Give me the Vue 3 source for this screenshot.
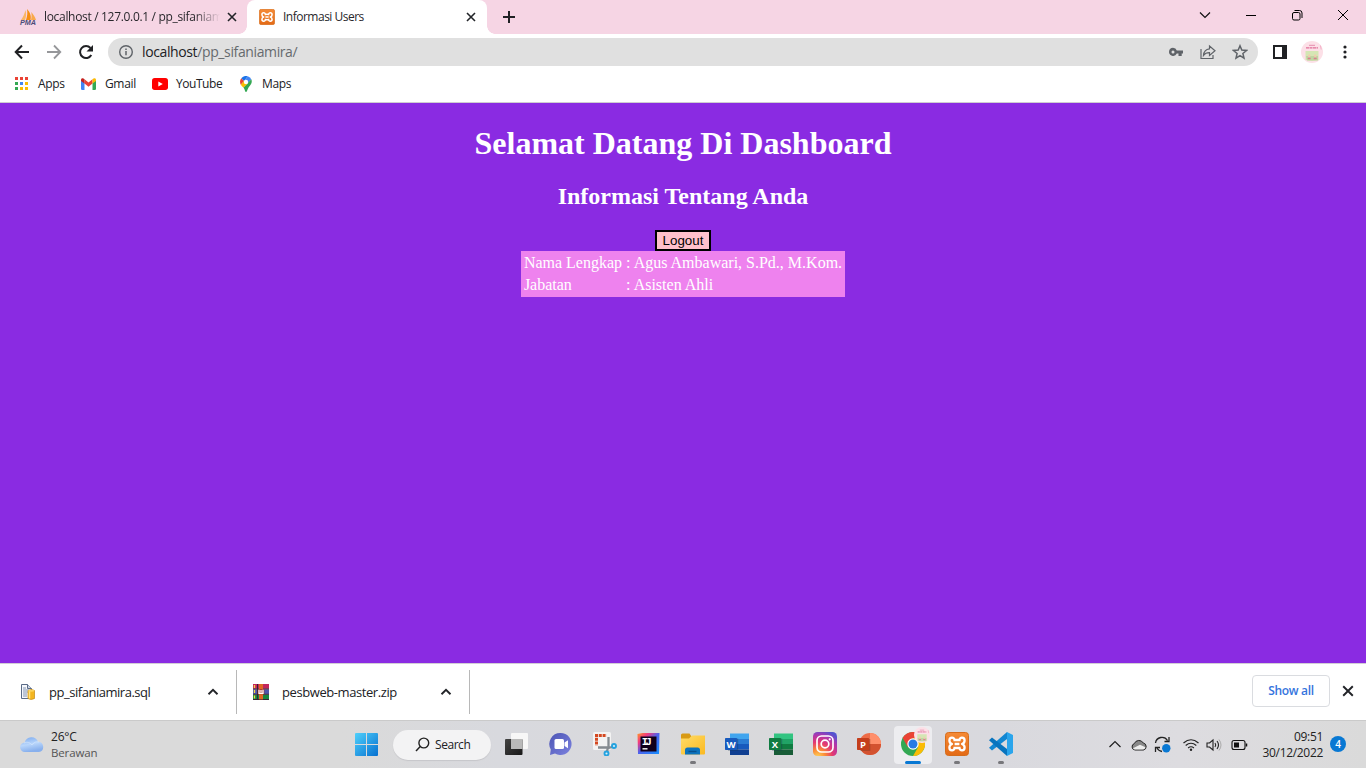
<script setup>
const apps = ['#ea4335', '#ea4335', '#ea4335', '#34a853', '#4285f4', '#fbbc04', '#34a853', '#fbbc04', '#fbbc04']
const office = [
  { letter: 'W', name: 'word', colors: ['#41a5ee', '#2b7cd3', '#185abd', '#103f91'], tile: '#185abd' },
  { letter: 'X', name: 'excel', colors: ['#33c481', '#21a366', '#107c41', '#185c37'], tile: '#107c41' },
]
const person = [
  ['Nama Lengkap', ': Agus Ambawari, S.Pd., M.Kom.'],
  ['Jabatan', ': Asisten Ahli'],
]
</script>

<template>
  <div class="screen">
    <svg class="defs" width="0" height="0" aria-hidden="true">
      <defs>
        <linearGradient id="orange" x1="0" y1="0" x2="0" y2="1"><stop offset="0" stop-color="#f58a35" /><stop offset="1" stop-color="#e36a16" /></linearGradient>
        <linearGradient id="win" x1="0" y1="0" x2="1" y2="1"><stop offset="0" stop-color="#4fd0fb" /><stop offset="1" stop-color="#0670d0" /></linearGradient>
        <linearGradient id="cloud" x1="0" y1="0" x2="0.3" y2="1"><stop offset="0" stop-color="#78a8ee" /><stop offset="0.55" stop-color="#b9d6fb" /><stop offset="1" stop-color="#88b0ed" /></linearGradient>
        <linearGradient id="chat" x1="0" y1="0" x2="1" y2="1"><stop offset="0" stop-color="#4c55b4" /><stop offset="1" stop-color="#7c82df" /></linearGradient>
        <linearGradient id="fold" x1="0" y1="0" x2="1" y2="1"><stop offset="0" stop-color="#ffdc68" /><stop offset="1" stop-color="#fbb920" /></linearGradient>
        <linearGradient id="ij" x1="0" y1="0" x2="1" y2="1"><stop offset="0" stop-color="#ff9a2a" /><stop offset="0.25" stop-color="#f4397d" /><stop offset="0.5" stop-color="#4b62ee" /><stop offset="1" stop-color="#1590ff" /></linearGradient>
        <radialGradient id="insta" cx="0.2" cy="1.05" r="1.15"><stop offset="0" stop-color="#fed559" /><stop offset="0.28" stop-color="#fb8b37" /><stop offset="0.55" stop-color="#e33872" /><stop offset="0.8" stop-color="#ae37ae" /><stop offset="1" stop-color="#5453d0" /></radialGradient>
        <linearGradient id="dark" x1="0" y1="0" x2="1" y2="1"><stop offset="0" stop-color="#444" /><stop offset="1" stop-color="#181818" /></linearGradient>
        <symbol id="xampp" viewBox="0 0 24 24">
          <rect x="0.5" y="0.5" width="23" height="23" rx="3" fill="url(#orange)" stroke="#d66c1b" />
          <path d="M9.600 9.300V8.400C9.600 4.700 4.400 4.800 4.400 8.500c0 1.800.8 2.900 2.600 3.500-1.800.6-2.600 1.700-2.600 3.500 0 3.700 5.200 3.800 5.200.1v-.9M14.400 9.300V8.400c0-3.700 5.200-3.600 5.200.1 0 1.800-.8 2.900-2.600 3.500 1.800.6 2.600 1.700 2.600 3.500 0 3.700-5.200 3.800-5.200.1v-.9M9.600 12h4.800M10 8h4M10 16h4" fill="none" stroke="#fff" stroke-width="2.300" stroke-linejoin="round" />
        </symbol>
        <symbol id="cross" viewBox="0 0 10 10"><path d="M1 1l8 8M9 1l-8 8" stroke="#222428" stroke-width="1.600" /></symbol>
        <symbol id="caret" viewBox="0 0 12 8"><path d="M1.500 6.200L6 1.900l4.500 4.300" fill="none" stroke="#222428" stroke-width="1.900" /></symbol>
        <symbol id="avatar" viewBox="0 0 22 22">
          <circle cx="11" cy="11" r="11" fill="#fce0e7" />
          <path d="M8 4.300h6" stroke="#e58cae" /><path d="M5 6.800h12" stroke="#df6e99" stroke-width="1.300" stroke-dasharray="3 .5" />
          <path d="M4.500 10h13v9l-6.500 1-6.500-1z" fill="#d5e6b4" /><path d="M5 15h12v4.500H6z" fill="#c0d5a2" />
          <circle cx="8.200" cy="14.800" r="1.300" fill="#f3cbb0" /><circle cx="14.200" cy="14.800" r="1.300" fill="#f3cbb0" />
          <path d="M6.700 17.500h3M12.700 17.500h3" stroke="#dc8090" stroke-width="1.700" /><path d="M19.500 4.500l.7 4" stroke="#f3abc4" />
        </symbol>
      </defs>
    </svg>

    <header class="tabs">
      <div class="tab idle">
        <svg class="pma" width="18" height="18" viewBox="0 0 18 18">
          <path d="M2 12C4 9 5.500 6 6.500 2c1 4 .7 7-.5 10z" fill="#f9b666" /><path d="M7 12c1.500-4 1.600-8 1-11 3 3 4.500 7 3.500 11z" fill="#f68e12" /><path d="M12 12c.8-3 .7-6 .2-8 2 2 4 5 4.800 8z" fill="#f9a94b" />
          <text x="1" y="16.700" textLength="16" lengthAdjust="spacingAndGlyphs" font-family="Liberation Sans" font-size="7" font-weight="700" font-style="italic" fill="#4b4b78">PMA</text>
        </svg>
        <span class="title faded">localhost / 127.0.0.1 / pp_sifaniamira</span>
        <svg class="close" width="10" height="10"><use href="#cross" /></svg>
      </div>
      <div class="tab active">
        <svg width="16" height="16"><use href="#xampp" /></svg>
        <span class="title users">Informasi Users</span>
        <svg class="close" width="10" height="10"><use href="#cross" /></svg>
      </div>
      <svg class="plus" width="12" height="12" viewBox="0 0 12 12"><path d="M6 0v12M0 6h12" stroke="#202124" stroke-width="2" /></svg>
      <div class="window-buttons">
        <svg width="12" height="12" viewBox="0 0 12 12"><path d="M1 3.500l5 5 5-5" fill="none" stroke="#111" stroke-width="1.200" /></svg>
        <svg width="12" height="12" viewBox="0 0 12 12"><path d="M1 6.500h10" stroke="#000" /></svg>
        <svg width="12" height="12" viewBox="0 0 12 12"><rect x="1.500" y="3.500" width="7.500" height="7.500" rx="1.500" fill="none" stroke="#000" /><path d="M3.500 1.500h5a2.500 2.500 0 012.500 2.500v5" fill="none" stroke="#000" /></svg>
        <svg width="12" height="12" viewBox="0 0 12 12"><path d="M1 1l10 10M11 1L1 11" stroke="#000" /></svg>
      </div>
    </header>

    <nav class="toolbar">
      <svg width="16" height="16" viewBox="0 0 16 16"><path d="M15 8H2M8 1.500L1.700 8 8 14.500" fill="none" stroke="#202124" stroke-width="2" /></svg>
      <svg width="16" height="16" viewBox="0 0 16 16"><path d="M1 8h13M8 1.500L14.300 8 8 14.500" fill="none" stroke="#96979a" stroke-width="1.800" /></svg>
      <svg width="16" height="16" viewBox="0 0 16 16"><path d="M13.300 11A6 6 0 1 1 12.500 4" fill="none" stroke="#202124" stroke-width="2" /><path d="M15 1v6.500H8.500z" fill="#202124" /></svg>
      <div class="address">
        <svg class="info" width="16" height="16" viewBox="0 0 16 16"><circle cx="8" cy="8" r="6.300" fill="none" stroke="#5f6368" stroke-width="1.400" /><path d="M8 7v4.300M8 4.400v1.500" stroke="#5f6368" stroke-width="1.500" /></svg>
        <span class="url">localhost<span>/pp_sifaniamira/</span></span>
        <div class="actions">
          <svg width="16" height="16" viewBox="0 0 16 16"><path fill-rule="evenodd" d="M5 3.700a4 4 0 013.800 2.700H15v3.200h-1.300V12h-3.200V9.600H8.800A4.100 4.100 0 115 3.700zM5 6.400a1.500 1.500 0 100 3 1.500 1.500 0 000-3z" fill="#5f6368" /></svg>
          <svg width="16" height="16" viewBox="0 0 16 16"><path d="M1 5v9.500h12V11M9.500 2l5.500 4.800-5.500 4.700V8.700c-3 0-4.700.8-6 2.700.3-4 2.600-6.200 6-6.600z" fill="none" stroke="#5f6368" stroke-width="1.200" /></svg>
          <svg width="16" height="16" viewBox="0 0 16 16"><path d="M8 1.800l1.800 4.300 4.700.4-3.600 3 1.100 4.700L8 11.700l-4 2.500 1.100-4.700-3.600-3 4.700-.4z" fill="none" stroke="#5f6368" stroke-width="1.500" /></svg>
        </div>
      </div>
      <svg class="panel" width="14" height="14" viewBox="0 0 14 14"><path d="M1 1h12v12H1z" fill="none" stroke="#202124" stroke-width="2" /><path d="M9 0h5v14H9z" fill="#202124" /></svg>
      <svg class="face" width="22" height="22"><use href="#avatar" /></svg>
      <svg class="more" width="4" height="14" viewBox="0 0 4 14"><g fill="#202124"><circle cx="2" cy="2" r="1.600" /><circle cx="2" cy="7" r="1.600" /><circle cx="2" cy="12" r="1.600" /></g></svg>
    </nav>

    <nav class="bookmarks">
      <span class="mark m-apps"><span class="grid"><i v-for="(c, i) in apps" :key="i" :style="{ background: c }"></i></span><b>Apps</b></span>
      <span class="mark m-mail">
        <svg width="15" height="12" viewBox="0 0 15 12"><path d="M0 2l3.500 2.500V12H1.300A1.300 1.300 0 010 10.700z" fill="#4285f4" /><path d="M15 2l-3.500 2.500V12h2.200a1.300 1.300 0 001.300-1.300z" fill="#34a853" /><path d="M3.500 1.200l4 3.200 4-3.200v4.300l-4 3.200-4-3.200z" fill="#ea4335" /><path d="M0 2C0 .2 1.900-.4 3.500 1.200v4.300L0 3z" fill="#c5221f" /><path d="M15 2c0-1.800-1.900-2.400-3.500-.8v4.300L15 3z" fill="#fbbc04" /></svg><b>Gmail</b>
      </span>
      <span class="mark m-tube"><svg width="16" height="12" viewBox="0 0 16 12"><rect width="16" height="12" rx="2.700" fill="#f00" /><path d="M6.300 3.400v5.200L10.800 6z" fill="#fff" /></svg><b>YouTube</b></span>
      <span class="mark m-maps">
        <svg width="12" height="16" viewBox="0 0 12 16"><path d="M1.300 2.300L4.200 5 .8 8.700A6 6 0 011.300 2.300z" fill="#ea4335" /><path d="M1.300 2.300A6 6 0 017.800.3L4.200 5z" fill="#1a73e8" /><path d="M7.800.3a6 6 0 013.500 3L7.600 7.500 4.200 5z" fill="#4285f4" /><path d="M11.300 3.300c1.300 3-.4 5.200-2.200 7.400C7.500 12.700 7 16 6 16s-1-2.500-2.600-4.500z" fill="#34a853" /><path d="M.8 8.700l3.400-4 3.400 3-4.200 3.800A13 13 0 01.8 8.700z" fill="#fbbc04" /><circle cx="6" cy="6" r="2.200" fill="#fff" /></svg><b>Maps</b>
      </span>
    </nav>

    <main class="page">
      <h1>Selamat Datang Di Dashboard</h1>
      <h2>Informasi Tentang Anda</h2>
      <button>Logout</button>
      <table><tbody><tr v-for="row in person" :key="row[0]"><td>{{ row[0] }}</td><td>{{ row[1] }}</td></tr></tbody></table>
    </main>

    <section class="downloads">
      <div class="file first">
        <svg width="16" height="16" viewBox="0 0 16 16"><path d="M1.500.5h6l4 4v10h-10z" fill="#f5f7fb" stroke="#5a6b87" /><path d="M7.500.5v4h4" fill="#d0d8e4" stroke="#5a6b87" /><path d="M3 4h3M3 6h6M3 8h5M3 10h4M3 12h4" stroke="#7688a8" stroke-width=".9" /><path d="M8 6.500q3.500-2 6.500 0v8q-3.500 2-6.500 0z" fill="#f3b51f" stroke="#c48a12" stroke-width=".7" /><path d="M9.500 7v7.500" stroke="#ffe380" stroke-width="1.500" /><ellipse cx="11.200" cy="6.700" rx="3.200" ry="1" fill="#fbd45e" /></svg>
        <span class="sql">pp_sifaniamira.sql</span><svg class="up" width="12" height="8"><use href="#caret" /></svg>
      </div>
      <div class="file second">
        <svg width="16" height="16" viewBox="0 0 16 16"><path d="M0 0h16v4.800H0z" fill="#c3265b" /><path d="M0 5.300h16v4.800H0z" fill="#4e55ae" /><path d="M0 10.600h16v4.800H0z" fill="#178640" /><path d="M0 5h16M0 10.300h16M4.500 0v15.400M0 15.500h16" stroke="#372334" /><path d="M6 0h4v15.400H6z" fill="#df6725" /><path d="M1.500 1v3M1.500 6v3M1.500 11.500v3" stroke="#f6d747" stroke-width="1.300" /><path d="M4.800 5.200h6.500v5H4.800z" fill="#a5322e" /><path d="M6 5.800v3.500h4V5.800M8 6v2.500" fill="none" stroke="#fff" stroke-width="1.300" /></svg>
        <span class="zip">pesbweb-master.zip</span><svg class="up" width="12" height="8"><use href="#caret" /></svg>
      </div>
      <div class="show"><span>Show all</span></div>
      <svg class="dismiss" width="12" height="12"><use href="#cross" /></svg>
    </section>

    <footer class="taskbar">
      <div class="weather">
        <svg width="24" height="16" viewBox="0 0 24 16"><path d="M5 16a4.800 4.800 0 01-.3-9.600A7 7 0 0118 5.700 5.200 5.200 0 0119 16z" fill="url(#cloud)" /><path d="M4 7c3-1.500 6-.5 8 2 2-3 4-3.500 7-3" fill="none" stroke="#e1eefe" stroke-width=".7" opacity=".7" /></svg>
        <div><p class="temp">26°C</p><p class="sky">Berawan</p></div>
      </div>
      <svg class="start" width="23" height="23" viewBox="0 0 23 23"><path d="M0 1q0-1 1-1h10v11H0zM12 0h10q1 0 1 1v10H12zM0 12h11v11H1q-1 0-1-1zM12 12h11v10q0 1-1 1H12z" fill="url(#win)" /></svg>
      <div class="search"><svg width="15" height="15" viewBox="0 0 15 15"><circle cx="8.800" cy="6" r="4.900" fill="none" stroke="#222" stroke-width="1.400" /><path d="M5.200 9.600L1 14" stroke="#222" stroke-width="1.500" /></svg><span>Search</span></div>
      <div class="dock">
        <span class="slot"><svg width="24" height="24" viewBox="0 0 24 24"><rect x="6" y="1" width="17" height="16" rx="1" fill="#f7f7f7" /><rect x="0" y="7" width="17.500" height="16" rx="1" fill="url(#dark)" /><path d="M6 7h11.500v10H6z" fill="#b9b9b9" /></svg></span>
        <span class="slot"><svg width="24" height="24" viewBox="0 0 24 24"><path d="M11.500 1a11 11 0 11-5.500 20.500L1 23l.8-5.500A11 11 0 0111.500 1z" fill="url(#chat)" /><rect x="5.500" y="7" width="9.500" height="10" rx="1.500" fill="#fff" /><path d="M15.500 10.500l3.500-2.300v8L15.500 14z" fill="#fff" /></svg></span>
        <span class="slot"><svg width="24" height="24" viewBox="0 0 24 24"><rect x="0" y="0" width="18" height="18" rx="1.500" fill="#f3f3f3" /><path d="M2 3.500h11.500M3.500 5.800v8" fill="none" stroke="#d44820" stroke-width="3" stroke-dasharray="3 .8" /><path d="M15.500 5v11L22 14M5 15.500h10l-1.500 6" fill="none" stroke="#858b90" stroke-width="2.300" /><g fill="#d8eef8" stroke="#24a2df" stroke-width="1.900"><circle cx="21" cy="14" r="2" /><circle cx="13.500" cy="21.500" r="2" /></g></svg></span>
        <span class="slot"><svg width="24" height="24" viewBox="0 0 24 24"><path d="M.5 2l5-1h17l-.5 21H1z" fill="url(#ij)" /><path d="M3.500 4.500h16v15h-16z" fill="#10001a" /><text x="4.800" y="13" font-family="Liberation Mono" font-weight="700" font-size="10.500" textLength="10" fill="#fff">IJ</text><path d="M5.500 16.800h5" stroke="#eee" stroke-width="1.500" /></svg></span>
        <span class="slot"><svg width="24" height="24" viewBox="0 0 24 24"><path d="M0 3q0-1.500 1.500-1.500h7l2 3v7H0z" fill="#d89a15" /><path d="M0 6.500h8l3-3h13v18q0 1-1 1H1q-1 0-1-1z" fill="url(#fold)" /><path d="M4 22.500V18q0-2.500 2.500-2.500h10Q19 15.500 19 18v4.500z" fill="#0d73bd" /><path d="M7.500 19.500h8" stroke="#07508d" stroke-width="1.400" /></svg><i class="run"></i></span>
        <span v-for="app in office" :key="app.name" class="slot"><svg width="24" height="24" viewBox="1 0 24 24"><path d="M6 1.500h19V7H6z" :fill="app.colors[0]" /><path d="M6 7h19v5H6z" :fill="app.colors[1]" /><path d="M6 12h19v5.500H6z" :fill="app.colors[2]" /><path d="M6 17.500h19V23H6z" :fill="app.colors[3]" /><path d="M12 6.500h2.200v12.200H4V18" fill="#173653" opacity=".35" /><rect x="1" y="6" width="12" height="12" rx=".7" :fill="app.tile" /><text x="7" y="15.500" text-anchor="middle" font-family="Open Sans" font-size="9.500" font-weight="700" fill="#fff">{{ app.letter }}</text></svg></span>
        <span class="slot"><svg width="24" height="24" viewBox="0 0 24 24"><rect width="24" height="24" rx="4.500" fill="url(#insta)" /><rect x="4" y="4" width="16" height="16" rx="4.500" fill="none" stroke="#fff" stroke-width="1.700" /><circle cx="12" cy="12" r="3.800" fill="none" stroke="#fff" stroke-width="1.700" /><circle cx="16.700" cy="7.300" r="1.100" fill="#fff" /></svg></span>
        <span class="slot"><svg width="24" height="24" viewBox="1 0 24 24"><circle cx="14" cy="12" r="11" fill="#ed6c47" /><path d="M14 1a11 11 0 0111 11H14z" fill="#ff8f6b" /><path d="M3 12h22a11 11 0 01-22 0z" fill="#d35230" /><path d="M12 7h2.300v12H4" fill="#76311f" opacity=".4" /><rect x="1" y="6" width="12" height="12" rx=".7" fill="#c43e1c" /><text x="7" y="15.500" text-anchor="middle" font-family="Open Sans" font-size="9.500" font-weight="700" fill="#fff">P</text></svg></span>
        <span class="slot current">
          <svg width="24" height="24" viewBox="0 0 24 24"><circle cx="12" cy="12" r="12" fill="#34a853" /><path d="M1.600 6A12 12 0 0122.400 6H12L6.800 15z" fill="#ea4335" /><path d="M22.400 6A12 12 0 0112 24l5.200-9L12 6z" fill="#fbbc04" /><circle cx="12" cy="12" r="5.700" fill="#fff" /><circle cx="12" cy="12" r="4.500" fill="#287be3" /></svg>
          <svg class="profile" width="16" height="16"><use href="#avatar" /></svg><i class="run"></i>
        </span>
        <span class="slot"><svg width="24" height="24"><use href="#xampp" /></svg><i class="run"></i></span>
        <span class="slot"><svg width="24" height="24" viewBox="0 0 24 24"><path d="M18 0l6 3v18l-6 3z" fill="#2aa5ec" /><path d="M18 0L0 15.800 3 18.500 18 7z" fill="#1287d2" /><path d="M0 8.200L3 5.500 18 17v7z" fill="#0874be" /></svg><i class="run"></i></span>
      </div>
      <div class="tray">
        <svg class="t-up" width="14" height="9" viewBox="0 0 14 9"><path d="M1.500 7L7 1.600 12.500 7" fill="none" stroke="#222" stroke-width="1.300" /></svg>
        <svg class="t-cloud" width="16" height="12" viewBox="0 0 16 12"><path d="M4 11A3.300 3.300 0 013.300 4.600 5 5 0 0112.300 4 3.600 3.600 0 0112.500 11z" fill="#898989" stroke="#222" stroke-width="1" /><path d="M2 9.200l7-3.400 5.500 2.500q-.5 2.200-3 2.200H4q-1.500 0-2-1.300z" fill="#ededed" /></svg>
        <svg class="t-sync" width="17" height="17" viewBox="0 0 17 17"><path d="M1.500 7A6.500 6.500 0 0113.500 4.500M15 1v4.500h-4.500M8 15.500q-3-.6-5-3.200M1.500 16v-4.500H6" fill="none" stroke="#222" stroke-width="1.300" /><circle cx="12.300" cy="12.300" r="4.200" fill="#0878d3" /></svg>
        <svg class="t-wifi" width="16" height="14" viewBox="0 0 16 14"><path d="M.5 5Q8-1.500 15.500 5M2.700 7.500q5.300-4.500 10.600 0M5.100 10q2.900-2.500 5.800 0" fill="none" stroke="#222" stroke-width="1.200" /><circle cx="8" cy="11.800" r="1.200" fill="#222" /></svg>
        <svg class="t-sound" width="16" height="14" viewBox="0 0 16 14"><path d="M1 5h2.500L7 2v10L3.500 9H1zM9 5q1.500 2 0 4M11 3q3 4 0 8" fill="none" stroke="#222" stroke-width="1.100" /><path d="M13 1.500q4 5.500 0 11" fill="none" stroke="#aaa" /></svg>
        <svg class="t-battery" width="17" height="12" viewBox="0 0 17 12"><rect x="1" y="1.500" width="13" height="9" rx="2" fill="none" stroke="#111" stroke-width="1.100" /><path d="M3 3.500h5v5H3z" fill="#111" /><path d="M15.500 4.500v3" stroke="#111" stroke-width="1.500" /></svg>
        <div class="clock"><p class="hour">09:51</p><p class="date">30/12/2022</p></div>
        <span class="badge">4</span>
      </div>
    </footer>
  </div>
</template>

<style>
html, body { margin: 0; overflow: hidden; }
</style>

<style scoped>
* { box-sizing: border-box; }
.screen { width: 1366px; height: 768px; display: flex; flex-direction: column; background: #fff; color: #202124; font: 12px/16px "Open Sans", "Noto Sans", sans-serif; overflow: hidden; }
.defs { position: absolute; }
svg { display: block; flex: none; }
p { margin: 0; }
span { white-space: nowrap; }
.tabs { height: 34px; flex: none; display: flex; align-items: center; background: #f6d5e4; }
.tab { height: 34px; display: flex; align-items: center; position: relative; }
.idle { width: 247px; padding-left: 19px; }
.active { width: 240px; padding-left: 12px; background: #fff; border-radius: 8px 8px 0 0; }
.active::before, .active::after { content: ""; position: absolute; bottom: 0; width: 8px; height: 8px; }
.active::before { left: -8px; background: radial-gradient(circle at 0 0, transparent 7.500px, #fff 8px); }
.active::after { right: -8px; background: radial-gradient(circle at 100% 0, transparent 7.500px, #fff 8px); }
.title { color: #28272b; letter-spacing: -.32px; }
.idle .title { margin-left: 7px; width: 176px; overflow: hidden; mask-image: linear-gradient(90deg, #000 150px, transparent 176px); }
.active .title { margin-left: 8px; letter-spacing: -.5px; }
.close { margin-left: auto; margin-right: 11px; }
.idle .close { margin-right: 10px; }
.plus { margin-left: 16px; }
.window-buttons { margin-left: auto; margin-right: 17px; margin-bottom: 5px; display: flex; gap: 34px; }
.toolbar { height: 36px; flex: none; padding-left: 14px; display: flex; align-items: center; gap: 16px; }
.address { width: 1150px; height: 28px; border-radius: 14px; background: #e0e0e0; display: flex; align-items: center; padding: 0 10px; margin-left: -2px; }
.url { margin-left: 8px; font-size: 14px; line-height: 20px; letter-spacing: -.38px; }
.url span { color: #666a6e; }
.actions { display: flex; gap: 16px; margin-left: auto; }
.panel { margin-left: -1px; }
.face { margin-left: -2px; }
.more { margin-left: 4px; }
.bookmarks { height: 33px; flex: none; display: flex; padding: 0 0 4px 15px; align-items: center; border-bottom: 1px solid #cfccd2; }
.mark { display: flex; align-items: center; }
.mark b { font-weight: 400; letter-spacing: -.35px; }
.m-apps { width: 66px; gap: 10px; }
.m-mail { width: 71px; gap: 9px; }
.m-tube { width: 88px; gap: 8px; }
.m-tube b { letter-spacing: -.45px; }
.m-maps { gap: 10px; }
.grid { width: 13px; height: 13px; display: grid; grid-template-columns: repeat(3, 3px); gap: 2px; margin-bottom: 1px; }
.grid i { height: 3px; }
.page { height: 560px; flex: none; display: flex; flex-direction: column; align-items: center; background: #8a2be2; color: #fff; font-family: "Liberation Serif", "Times New Roman", serif; }
h1 { font-size: 32px; line-height: 36px; margin: 22px 0 22px; }
h2 { font-size: 24px; line-height: 27px; margin: 0 0 20px; }
button { width: 56px; height: 21px; padding: 0; border: 2px solid #000; background: pink; color: #000; font: 13.333px/17px "Liberation Sans", Arial, sans-serif; }
table { width: 324px; border-spacing: 2px; background: violet; font-size: 16px; line-height: 18px; }
td { padding: 1px; white-space: nowrap; }
.downloads { height: 57px; flex: none; border-top: 1px solid #d2cdd6; display: flex; align-items: center; }
.file { height: 44px; display: flex; align-items: center; border-right: 1px solid #b8b8b8; font-size: 13px; line-height: 18px; }
.first { width: 237px; padding: 0 17px 0 20px; }
.second { width: 233px; padding: 0 17px 0 16px; }
.file span { margin-left: 13px; }
.sql { letter-spacing: -.47px; }
.zip { letter-spacing: -.42px; }
.up { margin-left: auto; }
.show { margin-left: auto; width: 78px; height: 32px; margin-bottom: 3px; border: 1px solid #dadce0; border-radius: 4px; color: #3574dd; display: flex; align-items: center; justify-content: center; font-weight: 600; letter-spacing: -.3px; }
.dismiss { margin: 0 12px 2px; }
.taskbar { height: 48px; flex: none; display: flex; align-items: center; border-top: 1px solid #cacaca; background: linear-gradient(90deg, #dadada 0, #dadada 340px, #d8d9de 500px, #d9d9db 700px, #d9d9de 1000px, #dddce0 1180px, #dadada); }
.weather { width: 355px; padding-left: 20px; display: flex; align-items: center; gap: 7px; }
.weather svg { margin-bottom: 2px; }
.temp { color: #222; letter-spacing: -.2px; }
.sky { color: #555; font-size: 11.500px; letter-spacing: -.15px; }
.search { width: 98px; height: 30px; border-radius: 15px; background: #f3f3f4; margin-left: 15px; display: flex; align-items: center; padding-left: 22px; gap: 5px; box-shadow: 0 1px 1px #c6c6ca; }
.search span { letter-spacing: -.45px; }
.dock { display: flex; margin-left: 4px; }
.slot { width: 44px; height: 48px; position: relative; display: flex; align-items: center; justify-content: center; }
.slot > svg { margin-bottom: 1px; }
.run { position: absolute; width: 6px; height: 3px; border-radius: 2px; background: #77777b; bottom: 5px; left: 19px; }
.current::before { content: ""; position: absolute; left: 3px; top: 5px; width: 38px; height: 38px; background: #ededf0; border-radius: 4px; }
.current svg { position: relative; }
.current .profile { position: absolute; left: 23px; top: 6px; }
.current .run { width: 16px; left: 14px; background: #0878d3; bottom: 5px; }
.tray { margin-left: auto; margin-right: 20px; display: flex; align-items: center; }
.t-cloud { margin-left: 9px; }
.t-sync { margin-left: 7px; }
.t-wifi { margin-left: 12px; }
.t-sound { margin-left: 7px; }
.t-battery { margin-left: 9px; }
.clock { text-align: right; width: 75px; letter-spacing: -.32px; color: #222; }
.badge { width: 16px; height: 16px; margin-left: 7px; margin-bottom: 1px; border-radius: 50%; background: #0878d3; color: #fff; text-align: center; font-size: 10px; font-weight: 600; }
</style>
